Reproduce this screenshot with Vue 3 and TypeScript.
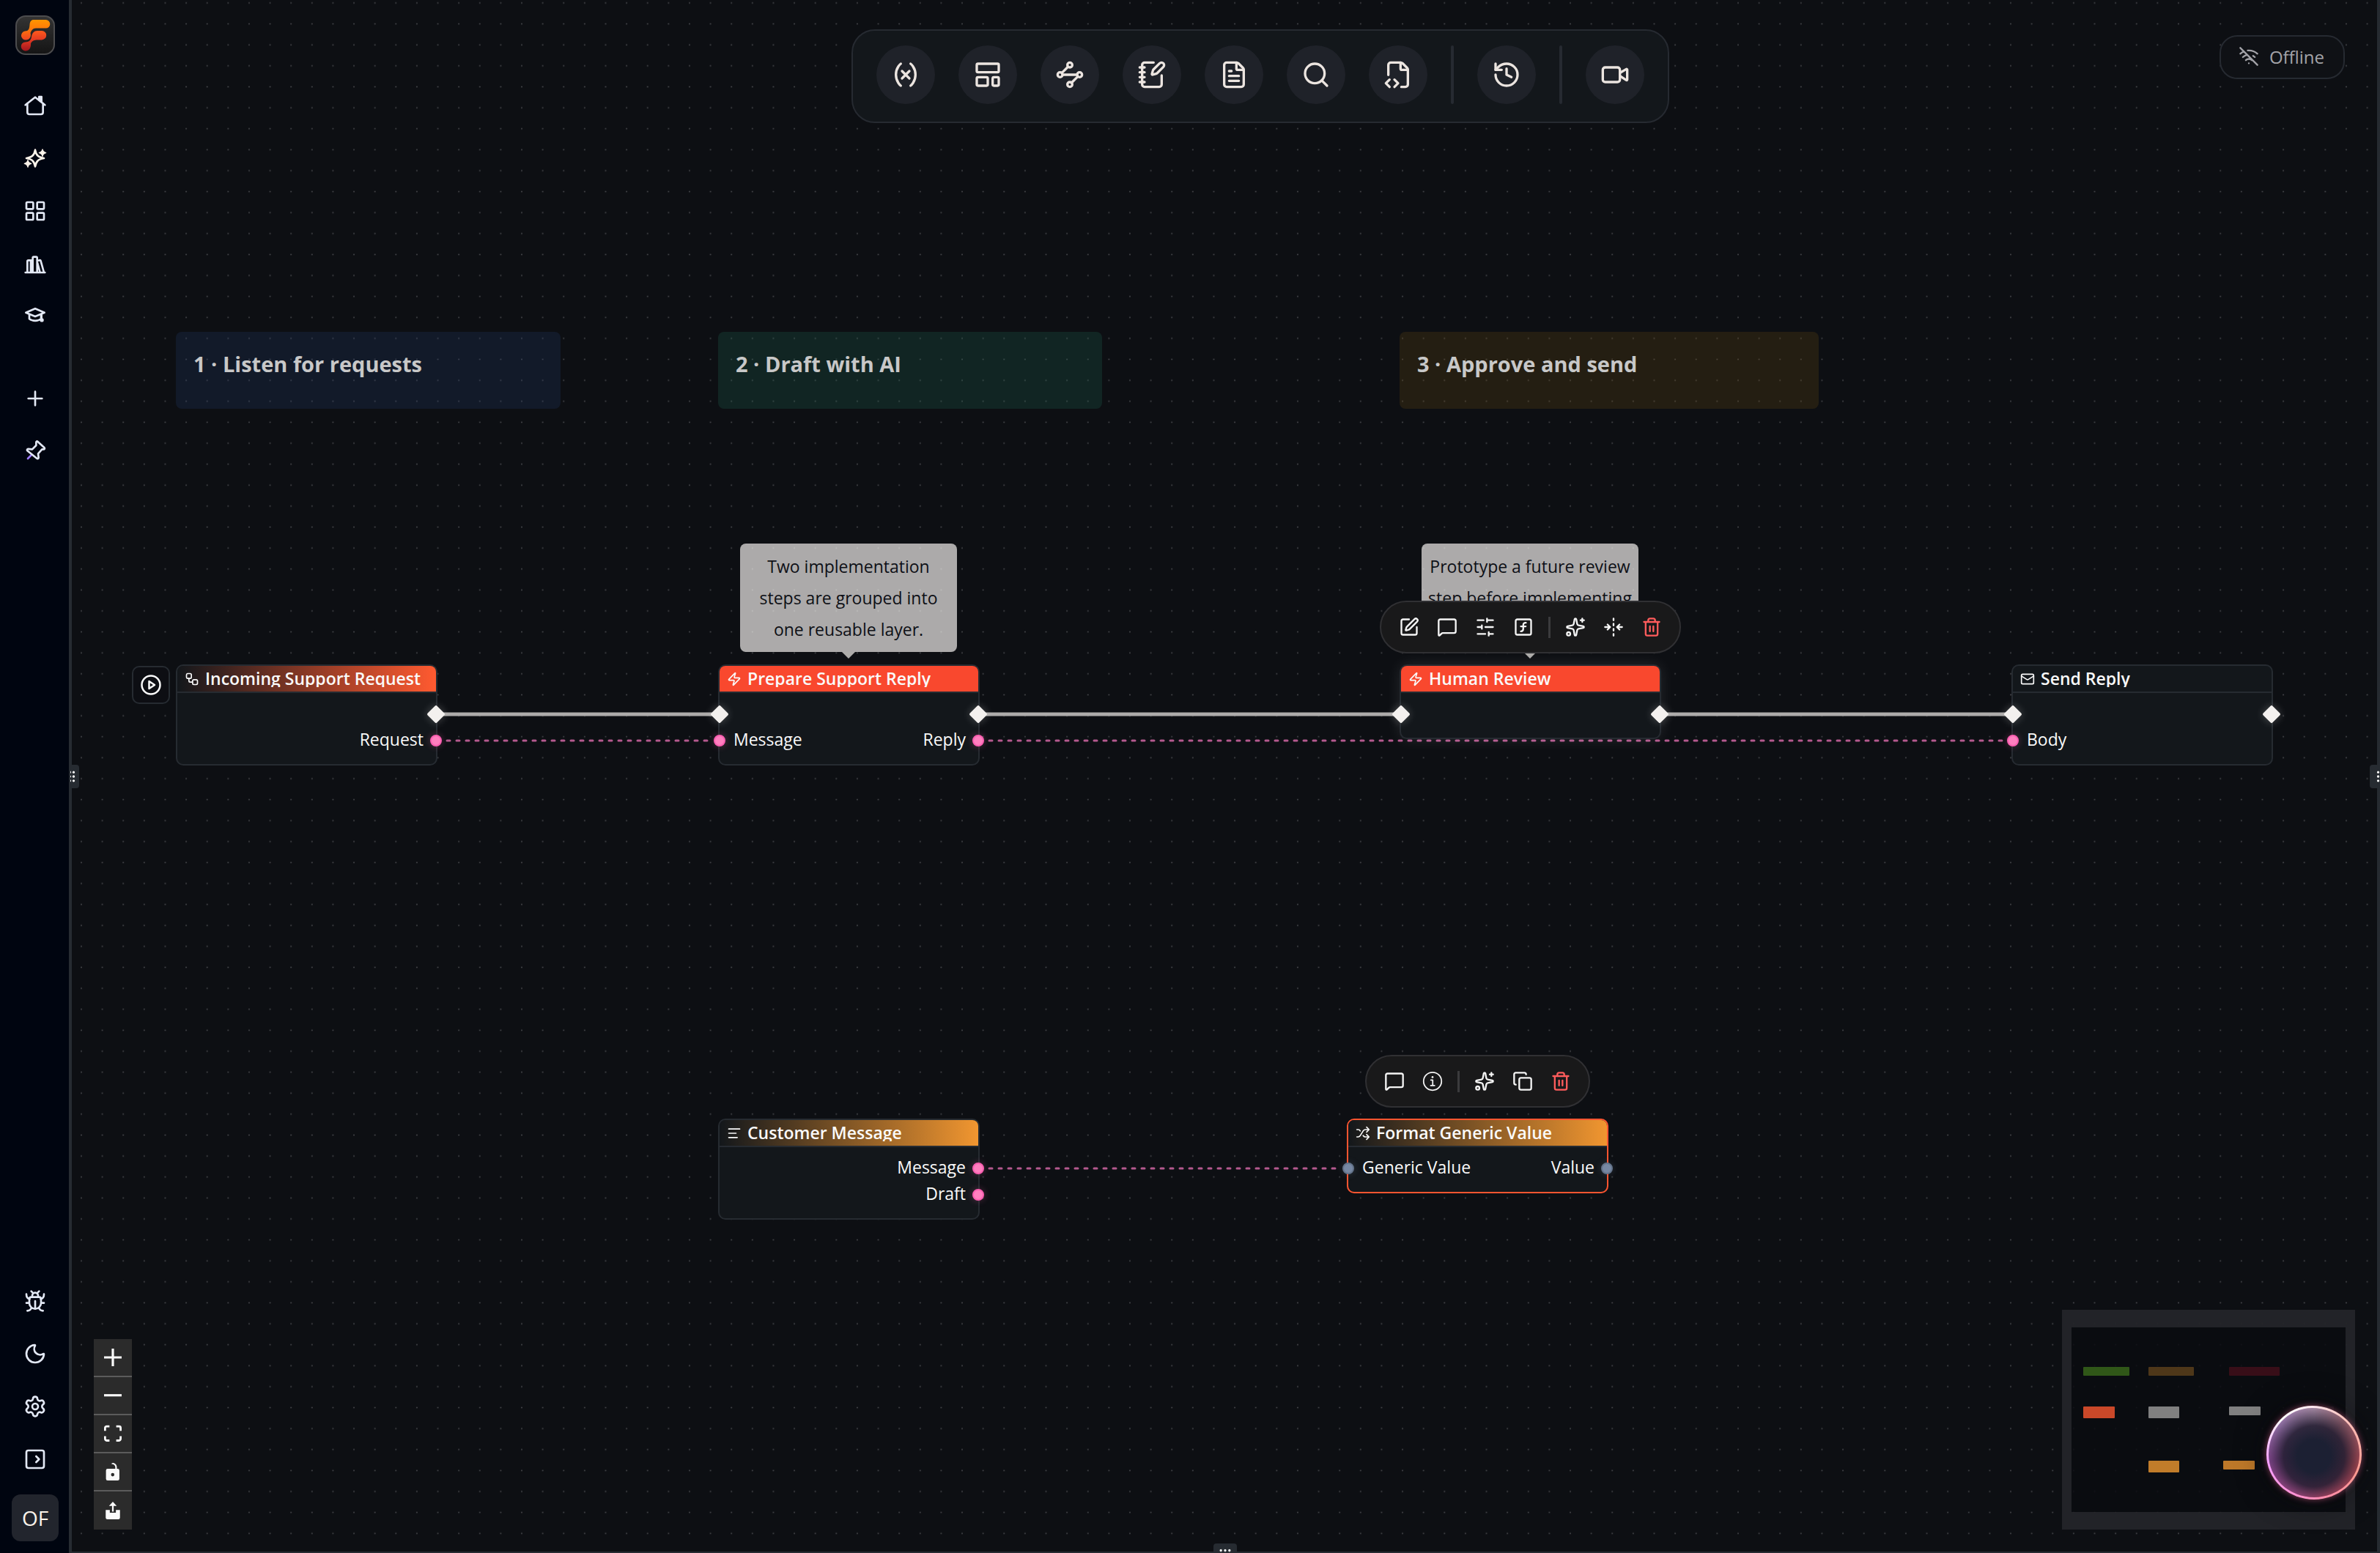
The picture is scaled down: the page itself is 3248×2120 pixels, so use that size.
<script setup lang="ts">
import { computed } from 'vue'

type PortKind = 'flow' | 'text' | 'generic'
interface Port { label?: string; kind: PortKind }
interface Row { in?: Port; out?: Port }
interface FlowNode {
  id: string; title: string; icon: string; x: number; y: number; tone: string; rows: Row[]
}

// ---- canvas grid -------------------------------------------------------
const zoom = 0.7155
const gap = computed(() => 40 * zoom)
const gridOrigin = { x: 14, y: 4 }

// ---- icons (24 x 24 stroke glyphs) ------------------------------------
const icons: Record<string, string> = {
  home: '<path d="M2 11.5 12 3.5l10 8"/><path d="M4 10v9a2 2 0 0 0 2 2h12a2 2 0 0 0 2-2v-9"/><path d="M16 3h2.500v5.500L16 6.500z" fill="currentColor"/>',
  sparkFilled: '<path d="M12 3.500c1 5.500 3 7.500 9 8.500-6 1-8 3-9 8.500-1-5.500-3-7.500-9-8.500 6-1 8-3 9-8.500z"/><path fill="currentColor" stroke-width="1" d="M19.500 3c.4 2 1.200 3 3.500 3.500-2.300.5-3.100 1.500-3.500 3.500-.4-2-1.200-3-3.500-3.500 2.300-.5 3.100-1.500 3.500-3.500zM4.500 14c.4 2 1.200 3 3.500 3.500-2.300.5-3.100 1.500-3.500 3.500-.4-2-1.200-3-3.500-3.500C3.300 17 4.100 16 4.500 14z"/>',
  grid: '<rect x="3" y="3" width="7" height="7" rx="1"/><rect x="14" y="3" width="7" height="7" rx="1"/><rect x="14" y="14" width="7" height="7" rx="1"/><rect x="3" y="14" width="7" height="7" rx="1"/>',
  library: '<path d="M2 21h20M4 21V9.500a1 1 0 0 1 1-1h4M9.500 21V6a1 1 0 0 1 1-1h2.500a1 1 0 0 1 1 1v15M7.500 9v12M14 9l2.500-.6a1 1 0 0 1 1.200.7L21 21M14 10l3 11"/>',
  school: '<path d="M12 4 2.500 8 12 12l9.500-4z"/><path d="M6 10v4.500c3 2.500 9 2.500 12 0V10M18.500 9.500v5"/><circle cx="18.800" cy="15.700" r="1"/>',
  plus: '<path d="M5 12h14M12 5v14"/>',
  bug: '<path d="M12 20v-8M9 7.500V6.500a3 3 0 0 1 6 0v1"/><path d="M8 8h8a2 2 0 0 1 2 2v4a6 6 0 0 1-12 0v-4a2 2 0 0 1 2-2zM8 2l2 2M16 2l-2 2M3 5c0 3 1 4.500 3.500 5M21 5c0 3-1 4.500-3.500 5M3 14h3M18 14h3M4 22c1.500 0 3-.5 4-2.500M20 22c-1.500 0-3-.5-4-2.500"/>',
  moon: '<path d="M20.985 12.486a9 9 0 1 1-9.473-9.472c.405-.022.617.46.402.803a6 6 0 0 0 8.268 8.268c.344-.215.825-.004.803.401"/>',
  settings: '<path d="M9.671 4.136a2.34 2.34 0 0 1 4.659 0 2.34 2.34 0 0 0 3.319 1.915 2.34 2.34 0 0 1 2.330 4.033 2.34 2.34 0 0 0 0 3.831 2.34 2.34 0 0 1-2.330 4.033 2.34 2.34 0 0 0-3.319 1.915 2.34 2.34 0 0 1-4.659 0 2.34 2.34 0 0 0-3.320-1.915 2.34 2.34 0 0 1-2.330-4.033 2.34 2.34 0 0 0 0-3.831A2.34 2.34 0 0 1 6.350 6.051a2.34 2.34 0 0 0 3.319-1.915"/><circle cx="12" cy="12" r="3"/>',
  expand: '<rect x="3" y="3" width="18" height="18" rx="2"/><path d="m13 9 3 3-3 3"/>',
  pin: '<path d="M8.500 15.500 4.500 19.500" stroke="#9d7bff"/><path d="M14.500 2 21.500 8.500c.5.8 0 1.500-1 1.500l-1.500 0-4 4.500.5 4c0 1-1 1.500-1.800.8L4 11.500c-.7-.8-.2-1.800.8-1.800l4.200.3L13 6V3c0-1 .8-1.600 1.500-1z"/>',
  variable: '<path d="M8 21s-4-3-4-9 4-9 4-9M16 3s4 3 4 9-4 9-4 9M15 9l-6 6M9 9l6 6"/>',
  template: '<rect x="3" y="3" width="18" height="7" rx="1"/><rect x="3" y="14" width="9" height="7" rx="1"/><rect x="16" y="14" width="5" height="7" rx="1"/>',
  waypoints: '<path d="m10.586 5.414-5.172 5.172M18.586 13.414l-5.172 5.172M6 12h12"/><circle cx="12" cy="20" r="2"/><circle cx="12" cy="4" r="2"/><circle cx="20" cy="12" r="2"/><circle cx="4" cy="12" r="2"/>',
  notebook: '<path d="M13.400 2H6a2 2 0 0 0-2 2v16a2 2 0 0 0 2 2h12a2 2 0 0 0 2-2v-7.400M2 6h4M2 10h4M2 14h4M2 18h4"/><path d="M21.378 5.626a1 1 0 1 0-3.004-3.004l-5.010 5.012a2 2 0 0 0-.506.854l-.837 2.870a.5.5 0 0 0 .62.62l2.870-.837a2 2 0 0 0 .854-.506z"/>',
  fileText: '<path d="M6 22a2 2 0 0 1-2-2V4a2 2 0 0 1 2-2h8a2.400 2.400 0 0 1 1.704.706l3.588 3.588A2.400 2.400 0 0 1 20 8v12a2 2 0 0 1-2 2z"/><path d="M14 2v5a1 1 0 0 0 1 1h5M10 9H8M16 13H8M16 17H8"/>',
  search: '<circle cx="11" cy="11" r="8"/><path d="m21 21-4.300-4.300"/>',
  fileCode: '<path d="M4 12.150V4a2 2 0 0 1 2-2h8a2.400 2.400 0 0 1 1.706.706l3.588 3.588A2.400 2.400 0 0 1 20 8v12a2 2 0 0 1-2 2h-3.350"/><path d="M14 2v5a1 1 0 0 0 1 1h5M5 16l-3 3 3 3M9 22l3-3-3-3"/>',
  history: '<path d="M3 12a9 9 0 1 0 9-9 9.750 9.750 0 0 0-6.740 2.740L3 8"/><path d="M3 3v5h5M12 7v5l4 2"/>',
  video: '<path d="m16 13 5.223 3.482a.5.5 0 0 0 .777-.416V7.870a.5.5 0 0 0-.752-.432L16 10.500"/><rect x="2" y="6" width="14" height="12" rx="2"/>',
  offline: '<path d="M12 20h.01M8.500 16.429a5 5 0 0 1 7 0M5 12.859a10 10 0 0 1 5.170-2.690M19 12.859a10 10 0 0 0-2.007-1.523M2 8.820a15 15 0 0 1 4.177-2.643M22 8.820a15 15 0 0 0-11.288-3.764M2 2l20 20"/>',
  edit: '<path d="M12 3H5a2 2 0 0 0-2 2v14a2 2 0 0 0 2 2h14a2 2 0 0 0 2-2v-7"/><path d="M18.375 2.625a1 1 0 0 1 3 3l-9.013 9.014a2 2 0 0 1-.853.505l-2.873.84a.5.5 0 0 1-.62-.62l.84-2.873a2 2 0 0 1 .506-.852z"/>',
  comment: '<path d="M22 17a2 2 0 0 1-2 2H6.828a2 2 0 0 0-1.414.586l-2.202 2.202A.71.71 0 0 1 2 21.286V5a2 2 0 0 1 2-2h16a2 2 0 0 1 2 2z"/>',
  sliders: '<path d="M21 4h-7M10 4H3M21 12h-9M8 12H3M21 20h-5M12 20H3M14 2v4M8 10v4M16 18v4"/>',
  func: '<rect x="3" y="3" width="18" height="18" rx="2"/><path d="M9 17c2 0 2.800-1 2.800-2.800V10c0-2 1-3.300 3.200-3M9 11.200h5.700"/>',
  sparkles: '<path d="M11.017 2.814a1 1 0 0 1 1.966 0l1.051 5.558a2 2 0 0 0 1.594 1.594l5.558 1.051a1 1 0 0 1 0 1.966l-5.558 1.051a2 2 0 0 0-1.594 1.594l-1.051 5.558a1 1 0 0 1-1.966 0l-1.051-5.558a2 2 0 0 0-1.594-1.594l-5.558-1.051a1 1 0 0 1 0-1.966l5.558-1.051a2 2 0 0 0 1.594-1.594zM20 2v4M22 4h-4"/><circle cx="4" cy="20" r="2"/>',
  fold: '<path d="M2 12h6M22 12h-6M12 2v2M12 8v2M12 14v2M12 20v2M19 9l-3 3 3 3M5 15l3-3-3-3"/>',
  trash: '<path d="M10 11v6M14 11v6M19 6v14a2 2 0 0 1-2 2H7a2 2 0 0 1-2-2V6M3 6h18M8 6V4a2 2 0 0 1 2-2h4a2 2 0 0 1 2 2v2"/>',
  copy: '<rect x="8" y="8" width="14" height="14" rx="2"/><path d="M4 16c-1.100 0-2-.9-2-2V4c0-1.100.9-2 2-2h10c1.100 0 2 .9 2 2"/>',
  info: '<g stroke-width="1.500"><circle cx="12" cy="12" r="10.500"/><path d="M10 10.500h2.200v6.500M9.800 17h4.600"/></g><circle cx="12" cy="7.200" r="1.200" fill="currentColor" stroke="none"/>',
  zap: '<path d="M4 14a1 1 0 0 1-.78-1.630l9.900-10.200a.5.5 0 0 1 .86.46l-1.920 6.020A1 1 0 0 0 13 10h7a1 1 0 0 1 .78 1.630l-9.900 10.200a.5.5 0 0 1-.86-.46l1.920-6.020A1 1 0 0 0 11 14z"/>',
  workflow: '<rect x="3" y="3" width="8" height="8" rx="2"/><path d="M7 11v4a2 2 0 0 0 2 2h4"/><rect x="13" y="13" width="8" height="8" rx="2"/>',
  mail: '<rect x="2" y="4" width="20" height="16" rx="2"/><path d="m22 7-8.970 5.700a1.940 1.940 0 0 1-2.060 0L2 7"/>',
  lines: '<path d="M21 5H3M15 12H3M17 19H3"/>',
  shuffle: '<path d="m18 14 4 4-4 4M18 2l4 4-4 4M2 18h1.973a4 4 0 0 0 3.300-1.700l5.454-8.600a4 4 0 0 1 3.300-1.700H22M2 6h1.972a4 4 0 0 1 3.600 2.200M22 18h-6.041a4 4 0 0 1-3.300-1.800l-.359-.45"/>',
  play: '<circle cx="12" cy="12" r="10"/><path d="M10 8l6 4-6 4z"/>',
  grip: '<circle cx="9" cy="12" r="1"/><circle cx="9" cy="5" r="1"/><circle cx="9" cy="19" r="1"/><circle cx="15" cy="12" r="1"/><circle cx="15" cy="5" r="1"/><circle cx="15" cy="19" r="1"/>',
}

// ---- chrome ------------------------------------------------------------
const mainNav = [
  { icon: 'home', label: 'Home' },
  { icon: 'sparkFilled', label: 'Assistant' },
  { icon: 'grid', label: 'Apps' },
  { icon: 'library', label: 'Library' },
  { icon: 'school', label: 'Learn' },
]
const pinNav = [
  { icon: 'plus', label: 'New' },
  { icon: 'pin', label: 'Pinned' },
]
const footNav = [
  { icon: 'bug', label: 'Report a bug' },
  { icon: 'moon', label: 'Theme' },
  { icon: 'settings', label: 'Settings' },
  { icon: 'expand', label: 'Expand sidebar' },
]
const tools = [
  { icon: 'variable', label: 'Variables' },
  { icon: 'template', label: 'Templates' },
  { icon: 'waypoints', label: 'Events' },
  { icon: 'notebook', label: 'Notes' },
  { icon: 'fileText', label: 'Logs' },
  { icon: 'search', label: 'Search' },
  { icon: 'fileCode', label: 'Source' },
  null,
  { icon: 'history', label: 'History' },
  null,
  { icon: 'video', label: 'Record' },
]

// ---- board content -----------------------------------------------------
const groups = [
  { title: '1 · Listen for requests', x: 144, y: 453, w: 525, tone: 'blue' },
  { title: '2 · Draft with AI', x: 884, y: 453, w: 524, tone: 'green' },
  { title: '3 · Approve and send', x: 1814, y: 453, w: 572, tone: 'amber' },
]
const flow: Port = { kind: 'flow' }
const nodes: FlowNode[] = [
  { id: 'in', title: 'Incoming Support Request', icon: 'workflow', x: 144, y: 907, tone: 'event',
    rows: [{ out: flow }, { out: { label: 'Request', kind: 'text' } }] },
  { id: 'prep', title: 'Prepare Support Reply', icon: 'zap', x: 884, y: 907, tone: 'layer',
    rows: [{ in: flow, out: flow }, { in: { label: 'Message', kind: 'text' }, out: { label: 'Reply', kind: 'text' } }] },
  { id: 'review', title: 'Human Review', icon: 'zap', x: 1814, y: 907, tone: 'layer hovered',
    rows: [{ in: flow, out: flow }] },
  { id: 'send', title: 'Send Reply', icon: 'mail', x: 2649, y: 907, tone: 'plain',
    rows: [{ in: flow, out: flow }, { in: { label: 'Body', kind: 'text' } }] },
  { id: 'msg', title: 'Customer Message', icon: 'lines', x: 884, y: 1527, tone: 'value',
    rows: [{ out: { label: 'Message', kind: 'text' } }, { out: { label: 'Draft', kind: 'text' } }] },
  { id: 'fmt', title: 'Format Generic Value', icon: 'shuffle', x: 1742, y: 1527, tone: 'value selected',
    rows: [{ in: { label: 'Generic Value', kind: 'generic' }, out: { label: 'Value', kind: 'generic' } }] },
]
const notes = [
  { lines: ['Two implementation', 'steps are grouped into', 'one reusable layer.'], x: 914, y: 742 },
  { lines: ['Prototype a future review', 'step before implementing'], x: 1844, y: 742 },
]
const menus = [
  { x: 1787, y: 820, items: ['edit', 'comment', 'sliders', 'func', '', 'sparkles', 'fold', 'trash'] },
  { x: 1767, y: 1440, items: ['comment', 'info', '', 'sparkles', 'copy', 'trash'] },
]
const flowEdges = [
  { x1: 510, x2: 876, y: 975 },
  { x1: 1250, x2: 1806, y: 975 },
  { x1: 2180, x2: 2641, y: 975 },
]
const dataEdges = [
  { x1: 514, x2: 876, y: 1011 },
  { x1: 1254, x2: 2641, y: 1011 },
  { x1: 1254, x2: 1734, y: 1595 },
]
const miniRects = [
  { x: 29, y: 78, w: 63, h: 12, c: '#305718' },
  { x: 118, y: 78, w: 62, h: 12, c: '#4e3719' },
  { x: 228, y: 78, w: 69, h: 12, c: '#380e18' },
  { x: 29, y: 132, w: 43, h: 16, c: '#ca4829' },
  { x: 118, y: 132, w: 42, h: 16, c: '#808080' },
  { x: 228, y: 132, w: 43, h: 12, c: '#808080' },
  { x: 328, y: 132, w: 43, h: 16, c: '#15171b' },
  { x: 118, y: 206, w: 42, h: 16, c: '#c17c2a' },
  { x: 220, y: 206, w: 43, h: 12, c: '#bd7829' },
]
const controls = [
  { label: 'Zoom in', box: '0 0 32 32', d: 'M32 18.133H18.133V32h-4.266V18.133H0v-4.266h13.867V0h4.266v13.867H32z' },
  { label: 'Zoom out', box: '0 0 32 5', d: 'M0 0h32v4.200H0z' },
  { label: 'Fit view', box: '0 0 32 30', d: 'M3.692 4.630c0-.53.4-.938.939-.938h5.215V0H4.708C2.130 0 0 2.054 0 4.630v5.216h3.692V4.631zM27.354 0h-5.200v3.692h5.170c.53 0 .984.4.984.939v5.215H32V4.631A4.624 4.624 0 0027.354 0zm.954 24.830c0 .532-.4.94-.939.94h-5.215v3.768h5.215c2.577 0 4.631-2.130 4.631-4.707v-5.139h-3.692v5.139zm-23.677.94c-.531 0-.939-.4-.939-.94v-5.138H0v5.139c0 2.577 2.130 4.707 4.708 4.707h5.138V25.770H4.631z' },
  { label: 'Lock', box: '0 0 25 32', d: 'M21.333 10.667H19.810V7.619C19.810 3.429 16.380 0 12.190 0c-4.114 1.828-1.370 2.133.305 2.438 1.676.305 4.420 2.590 4.420 5.181v3.048H3.047A3.056 3.056 0 000 13.714v15.238A3.056 3.056 0 003.048 32h18.285a3.056 3.056 0 003.048-3.048V13.714a3.056 3.056 0 00-3.048-3.047zM12.190 24.533a3.056 3.056 0 01-3.047-3.047 3.056 3.056 0 013.047-3.048 3.056 3.056 0 013.048 3.048 3.056 3.056 0 01-3.048 3.047z' },
  { label: 'Export', box: '0 0 26 32', d: 'M13 0l7 7.500h-5.500V18h-3V7.500H6zM0 15h7.500v5h11v-5H26v14a3 3 0 01-3 3H3a3 3 0 01-3-3z' },
]
const at = (p: { x: number; y: number; w?: number; h?: number }) => ({
  left: p.x + 'px',
  top: p.y + 'px',
  ...(p.w ? { width: p.w + 'px' } : {}),
  ...(p.h ? { height: p.h + 'px' } : {}),
})
</script>

<template>
  <div class="app">
    <aside class="sidebar">
      <a class="logo" href="#" aria-label="Start page">
        <svg viewBox="0 0 54 54">
          <defs>
            <linearGradient id="logoBg" x1="0" y1="0" x2="0" y2="1">
              <stop offset="0" stop-color="#343434" /><stop offset="1" stop-color="#141414" />
            </linearGradient>
            <linearGradient id="logoA" x1="0" y1="0" x2="0" y2="1">
              <stop offset="0" stop-color="#ff9500" /><stop offset="0.4" stop-color="#ff7d08" /><stop offset="1" stop-color="#f04423" />
            </linearGradient>
            <linearGradient id="logoB" x1="0" y1="0" x2="0" y2="1">
              <stop offset="0" stop-color="#ff5a1c" /><stop offset="0.45" stop-color="#e23a22" /><stop offset="1" stop-color="#a3161f" />
            </linearGradient>
          </defs>
          <rect x="1" y="1" width="52" height="52" rx="13" fill="url(#logoBg)" stroke="#4c4c4e" />
          <path fill="url(#logoA)" d="M25 6H41.500a5.800 5.800 0 0 1 0 11.600H28c-4.500 0-6 3-7.500 6.500 1.500 5-1 9.400-6 9.400a6 6 0 0 1-1.500-11.900c5-.5 6-2.600 6.500-8.600.3-4.500 2-7 5.500-7z" />
          <path fill="url(#logoB)" d="M30 21h6a6.200 6.200 0 0 1 0 12.400h-5.500c-4.500 0-8 1-9.500 5 .5 6-2.500 10-7 10a6 6 0 0 1-.5-12c5-.3 7.500-1.700 8.500-7.200.8-5.200 3.500-8.200 8-8.200z" />
        </svg>
      </a>
      <nav class="nav">
        <button v-for="n in mainNav" :key="n.label" class="nav-btn" :class="n.icon" :aria-label="n.label">
          <svg viewBox="0 0 24 24" v-html="icons[n.icon]" />
        </button>
      </nav>
      <nav class="nav">
        <button v-for="n in pinNav" :key="n.label" class="nav-btn" :aria-label="n.label">
          <svg viewBox="0 0 24 24" v-html="icons[n.icon]" />
        </button>
      </nav>
      <nav class="nav foot">
        <button v-for="n in footNav" :key="n.label" class="nav-btn" :aria-label="n.label">
          <svg viewBox="0 0 24 24" v-html="icons[n.icon]" />
        </button>
        <button class="avatar">OF</button>
      </nav>
    </aside>

    <main class="canvas">
      <svg class="layer-svg">
        <defs>
          <pattern id="dots" :x="gridOrigin.x" :y="gridOrigin.y - gap / 2" :width="gap" :height="gap" patternUnits="userSpaceOnUse">
            <circle cx="1" :cy="gap / 2" r="1" />
          </pattern>
        </defs>
        <rect width="100%" height="100%" fill="url(#dots)" />
      </svg>

      <section v-for="g in groups" :key="g.title" class="group" :class="g.tone" :style="at(g)">
        <h2>{{ g.title }}</h2>
      </section>

      <svg class="layer-svg">
        <line v-for="e in dataEdges" :key="'d' + e.x1 + e.y" class="edge-data" :x1="e.x1" :x2="e.x2" :y1="e.y" :y2="e.y" />
        <line v-for="e in flowEdges" :key="'f' + e.x1" class="edge-flow" :x1="e.x1" :x2="e.x2" :y1="e.y" :y2="e.y" />
      </svg>

      <button class="run" aria-label="Run" :style="at({ x: 84, y: 909 })">
        <svg viewBox="0 0 24 24" v-html="icons.play" />
      </button>

      <article v-for="n in nodes" :key="n.id" class="node" :class="n.tone" :style="at(n)">
        <header>
          <svg viewBox="0 0 24 24" v-html="icons[n.icon]" />
          <h3>{{ n.title }}</h3>
        </header>
        <div class="rows">
          <div v-for="(r, i) in n.rows" :key="i" class="row">
            <i v-if="r.in" class="port left" :class="r.in.kind" />
            <span class="in">{{ r.in?.label }}</span>
            <span class="out">{{ r.out?.label }}</span>
            <i v-if="r.out" class="port right" :class="r.out.kind" />
          </div>
        </div>
      </article>

      <div v-for="t in notes" :key="t.x" class="note" :style="at(t)">
        <p v-for="l in t.lines" :key="l">{{ l }}</p>
      </div>

      <div v-for="m in menus" :key="m.y" class="menu" role="toolbar" :style="at(m)">
        <template v-for="(it, i) in m.items" :key="i">
          <button v-if="it" :class="it" :aria-label="it">
            <svg viewBox="0 0 24 24" v-html="icons[it]" />
          </button>
          <span v-else class="sep" />
        </template>
      </div>

      <div class="topbar-wrap">
        <div class="topbar" role="toolbar">
          <template v-for="(t, i) in tools" :key="i">
            <button v-if="t" :aria-label="t.label">
              <svg viewBox="0 0 24 24" v-html="icons[t.icon]" />
            </button>
            <span v-else class="sep" />
          </template>
        </div>
      </div>

      <button class="status">
        <svg viewBox="0 0 24 24" v-html="icons.offline" />
        Offline
      </button>

      <div class="controls">
        <button v-for="c in controls" :key="c.label" :aria-label="c.label">
          <svg :viewBox="c.box"><path :d="c.d" /></svg>
        </button>
      </div>

      <svg class="minimap" viewBox="0 0 400 300">
        <path class="mask" fill-rule="evenodd" d="M0 0h400v300H0zM13 24v252h374V24z" />
        <rect class="view" x="13" y="24" width="374" height="252" />
        <rect v-for="r in miniRects" :key="r.x + '-' + r.y" :x="r.x" :y="r.y" :width="r.w" :height="r.h" :fill="r.c" rx="1" />
      </svg>
      <button class="orb" aria-label="Open assistant" />

      <div v-for="side in ['left', 'right', 'bottom']" :key="side" class="split" :class="side">
        <span class="grip"><svg viewBox="0 0 24 24" v-html="icons.grip" /></span>
      </div>
    </main>
  </div>
</template>

<style>
body { margin: 0; background: #0d0f13; }
</style>

<style scoped>
* { box-sizing: border-box; }
.app {
  display: flex;
  height: 100vh;
  overflow: hidden;
  font-family: "Open Sans", "Noto Sans", sans-serif;
  color: #fafafa;
}
button {
  border: 0;
  padding: 0;
  background: none;
  color: inherit;
  font: inherit;
  display: flex;
  align-items: center;
  justify-content: center;
}
svg { display: block; fill: none; stroke: currentColor; stroke-width: 2; stroke-linecap: round; stroke-linejoin: round; }
h2, h3, p { margin: 0; }

.sidebar {
  width: 96px;
  flex: none;
  display: flex;
  flex-direction: column;
  align-items: center;
  padding: 21px 0 16px 2px;
  border-right: 2px solid #262b31;
  background: #000510;
  color: #e2e8f4;
}
.logo { width: 54px; height: 54px; margin-bottom: 33px; }
.logo svg { stroke: none; }
.nav { display: flex; flex-direction: column; align-items: center; margin-bottom: 40px; }
.nav-btn { width: 64px; height: 72px; }
.nav-btn svg { width: 32px; height: 32px; }
.nav-btn.sparkFilled { color: #faf3ea; }
.foot { margin: auto 0 0; }
.avatar {
  width: 64px;
  height: 64px;
  margin-top: 12px;
  border-radius: 12px;
  background: #22252d;
  color: #faf3ea;
  font-size: 28px;
  line-height: 36px;
}

.canvas { position: relative; flex: 1; min-width: 0; background: #0d0f13; overflow: hidden; }
.layer-svg { position: absolute; inset: 0; width: 100%; height: 100%; stroke: none; }
.layer-svg circle { fill: #45464a; }
.edge-flow { stroke: #adabaa; stroke-width: 5; }
.edge-data { stroke: #b4598e; stroke-width: 3; stroke-dasharray: 4 9; }

.group { position: absolute; height: 105px; border-radius: 8px; padding: 24px; }
.group h2 { font-size: 29px; line-height: 40px; font-weight: 700; color: #c8c8c8; white-space: nowrap; }
.blue { background: rgba(37, 58, 108, 0.25); }
.green { background: rgba(32, 104, 82, 0.25); }
.amber { background: rgba(108, 74, 16, 0.25); }

.run {
  position: absolute;
  width: 52px;
  height: 52px;
  border: 2px solid #262b31;
  border-radius: 10px;
  background: #0d0e13;
}
.run svg { width: 30px; height: 30px; }

.node {
  position: absolute;
  width: 357px;
  border: 2px solid #262b31;
  border-radius: 10px;
  background: #13171b;
}
.node.selected { border-color: #ff5530; }
.node.hovered { box-shadow: 0 0 20px rgba(255, 255, 255, 0.1); }
.node header {
  display: flex;
  align-items: center;
  gap: 8px;
  height: 37px;
  padding: 0 10px;
  border-bottom: 2px solid #262b31;
  border-radius: 8px 8px 0 0;
}
.node header svg { width: 20px; height: 20px; flex: none; }
.node h3 { font-size: 23px; line-height: 23px; font-weight: 600; overflow: hidden; white-space: nowrap; }
.event header { background: linear-gradient(90deg, #13171b, #ff5a30); background-clip: padding-box; }
.layer header { background: #f9482e; background-clip: padding-box; }
.value header { background: linear-gradient(90deg, #13171b, #f19630); background-clip: padding-box; }
.rows { padding: 11px 0 14px; }
.row {
  position: relative;
  display: flex;
  justify-content: space-between;
  height: 36px;
  padding: 0 17px 0 19px;
  font-size: 23px;
  line-height: 33px;
}
.port { position: absolute; top: 10px; width: 16px; height: 16px; }
.port.left { left: -8px; }
.port.right { right: -8px; }
.port.flow {
  width: 18px;
  height: 18px;
  top: 9px;
  transform: rotate(45deg);
  border-radius: 2px;
  border: 1px solid #f3f0ee;
  background: #f3f0ee;
  box-shadow: 0 0 12px rgba(255, 255, 255, 0.25);
}
.port.flow.left { left: -9px; }
.port.flow.right { right: -9px; }
.port.text { border-radius: 50%; background: #ff7fbf; border: 2px solid #ff5fb2; box-shadow: 0 0 10px rgba(255, 105, 180, 0.3); }
.port.generic { border-radius: 50%; background: #7788a3; border: 2px solid #64748b; box-shadow: 0 0 10px rgba(100, 116, 139, 0.3); }

.note {
  position: absolute;
  width: 296px;
  min-height: 148px;
  padding: 10px 0 9px;
  border-radius: 8px;
  background: rgba(250, 248, 245, 0.67);
  color: #0e1016;
  font-size: 23px;
  line-height: 43px;
  text-align: center;
}
.note::after {
  content: "";
  position: absolute;
  top: 100%;
  left: 50%;
  margin-left: -9px;
  border: 9px solid transparent;
  border-top-color: #adacaa;
  border-bottom: 0;
}

.menu {
  position: absolute;
  display: flex;
  align-items: center;
  gap: 8px;
  height: 72px;
  padding: 0 16px;
  border: 2px solid #303033;
  border-radius: 36px;
  background: #19191a;
  color: #f5f5f5;
}
.menu button { width: 44px; height: 44px; }
.menu svg { width: 28px; height: 28px; }
.menu .sep { width: 3px; height: 29px; margin: 0 4px; background: #3b3b3d; }
.menu .trash { color: #ff5c5c; }

.topbar-wrap { position: absolute; top: 40px; left: 0; width: 100vw; display: flex; justify-content: center; pointer-events: none; }
.topbar {
  display: flex;
  gap: 32px;
  padding: 20px 32px 24px;
  border: 2px solid #262a31;
  border-radius: 32px;
  background: #13171b;
  color: #ece5e0;
  pointer-events: auto;
}
.topbar button { width: 80px; height: 80px; border-radius: 50%; background: #1f2229; }
.topbar svg { width: 40px; height: 40px; }
.topbar .sep { width: 4px; border-radius: 2px; background: #262a31; }

.status {
  position: absolute;
  top: 48px;
  right: 48px;
  height: 60px;
  padding: 0 26px 2px 24px;
  gap: 14px;
  border: 2px solid #262a31;
  border-radius: 24px;
  background: #0f1115;
  color: #a3a3a8;
  font-size: 24px;
}
.status svg { width: 28px; height: 28px; }

.controls { position: absolute; left: 32px; bottom: 32px; display: flex; flex-direction: column; }
.controls button { width: 52px; height: 52px; background: #2b2b2b; border-bottom: 2px solid #5b5b5b; }
.controls button:last-child { border-bottom: 0; }
.controls svg { width: 24px; height: 24px; fill: #fafafa; stroke: none; }

.minimap { position: absolute; right: 34px; bottom: 32px; width: 400px; height: 300px; stroke: none; }
.minimap .mask { fill: rgba(36, 37, 41, 0.95); }
.minimap .view { fill: rgba(11, 12, 17, 0.85); }

.orb {
  position: absolute;
  right: 25px;
  bottom: 73px;
  width: 130px;
  height: 128px;
  border-radius: 48% 52% 50% 50% / 52% 52% 48% 48%;
  border: 3px solid transparent;
  background:
    radial-gradient(circle at 50% 54%, #1c2033 25%, rgba(36, 30, 50, 0.9) 46%, rgba(36, 30, 50, 0) 74%) padding-box,
    conic-gradient(from 0deg, #a78ba5, #94606c 12%, #b04850 30%, #c8506e 45%, #bd559a 58%, #8a4894 72%, #9c78b0 86%, #a78ba5) padding-box,
    conic-gradient(from 0deg, #ffe6ee, #ffc3bd 12%, #ff9a90 32%, #ff8ca8 45%, #ff94d8 58%, #f5a0ff 72%, #fff 88%, #ffe6ee) border-box;
  box-shadow: 0 0 8px rgba(255, 110, 160, 0.5), 0 0 40px rgba(8, 8, 12, 0.6);
}

.split { position: absolute; display: flex; align-items: center; justify-content: center; background: #262b31; }
.split.left { left: -2px; top: 0; bottom: 0; width: 4px; }
.split.right { right: 0; top: 0; bottom: 0; width: 4px; }
.split.bottom { left: 0; right: 0; bottom: 0; height: 2px; }
.grip {
  flex: none;
  display: flex;
  align-items: center;
  width: 24px;
  height: 32px;
  padding-left: 4px;
  border-radius: 4px;
  background: #262b31;
}
.grip svg { flex: none; width: 20px; height: 20px; }
.bottom .grip { width: 32px; height: 24px; padding: 0; justify-content: center; }
.bottom .grip svg { transform: rotate(90deg); }
</style>
